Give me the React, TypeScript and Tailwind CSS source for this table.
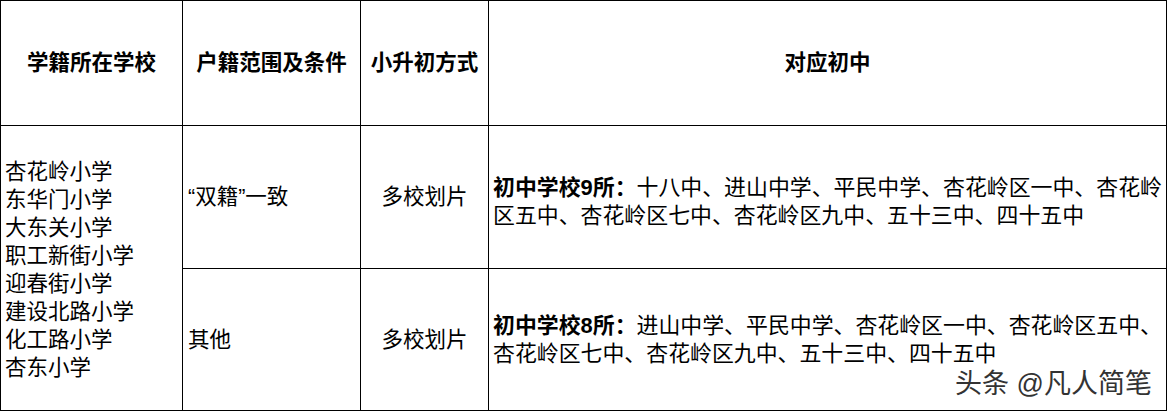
import React from "react";

const font = "font-['Liberation_Sans','Noto_Sans_CJK_SC',sans-serif]";

const schools = [
  "杏花岭小学",
  "东华门小学",
  "大东关小学",
  "职工新街小学",
  "迎春街小学",
  "建设北路小学",
  "化工路小学",
  "杏东小学",
];

const App = () => {
  return (
    <div className={`w-[1168px] h-[411px] bg-white text-black ${font}`}>
      <table className="border-collapse table-fixed w-[1167px] text-[21.5px] leading-[28px]">
        <colgroup>
          <col className="w-[182px]" />
          <col className="w-[178px]" />
          <col className="w-[128px]" />
          <col />
        </colgroup>
        <thead>
          <tr className="h-[125px]">
            <th className="border border-black font-bold text-center align-middle">学籍所在学校</th>
            <th className="border border-black font-bold text-center align-middle">户籍范围及条件</th>
            <th className="border border-black font-bold text-center align-middle whitespace-nowrap">小升初方式</th>
            <th className="border border-black font-bold text-center align-middle">对应初中</th>
          </tr>
        </thead>
        <tbody>
          <tr className="h-[143px]">
            <td rowSpan={2} className="border border-black align-middle pl-[4px] pt-[4px]">
              {schools.map((s) => (
                <div key={s}>{s}</div>
              ))}
            </td>
            <td className="border border-black align-middle pl-[5px]">“双籍”一致</td>
            <td className="border border-black align-middle text-center">多校划片</td>
            <td className="border border-black align-middle pl-[4px] pt-[10px] whitespace-nowrap text-[21.9px]">
              <span className="font-bold">初中学校9所：</span>十八中、进山中学、平民中学、杏花岭区一中、杏花岭
              <br />
              区五中、杏花岭区七中、杏花岭区九中、五十三中、四十五中
            </td>
          </tr>
          <tr className="h-[142px]">
            <td className="border border-black align-middle pl-[5px]">其他</td>
            <td className="border border-black align-middle text-center">多校划片</td>
            <td className="border border-black align-middle pl-[4px] whitespace-nowrap relative text-[21.9px]">
              <span className="font-bold">初中学校8所：</span>进山中学、平民中学、杏花岭区一中、杏花岭区五中、
              <br />
              杏花岭区七中、杏花岭区九中、五十三中、四十五中
              <div className="absolute right-[14px] bottom-[12px] text-[27px] leading-none text-[#333] [text-shadow:0_0_2px_#fff,0_0_2px_#fff]">
                头条 @凡人简笔
              </div>
            </td>
          </tr>
        </tbody>
      </table>
    </div>
  );
};

export default App;
